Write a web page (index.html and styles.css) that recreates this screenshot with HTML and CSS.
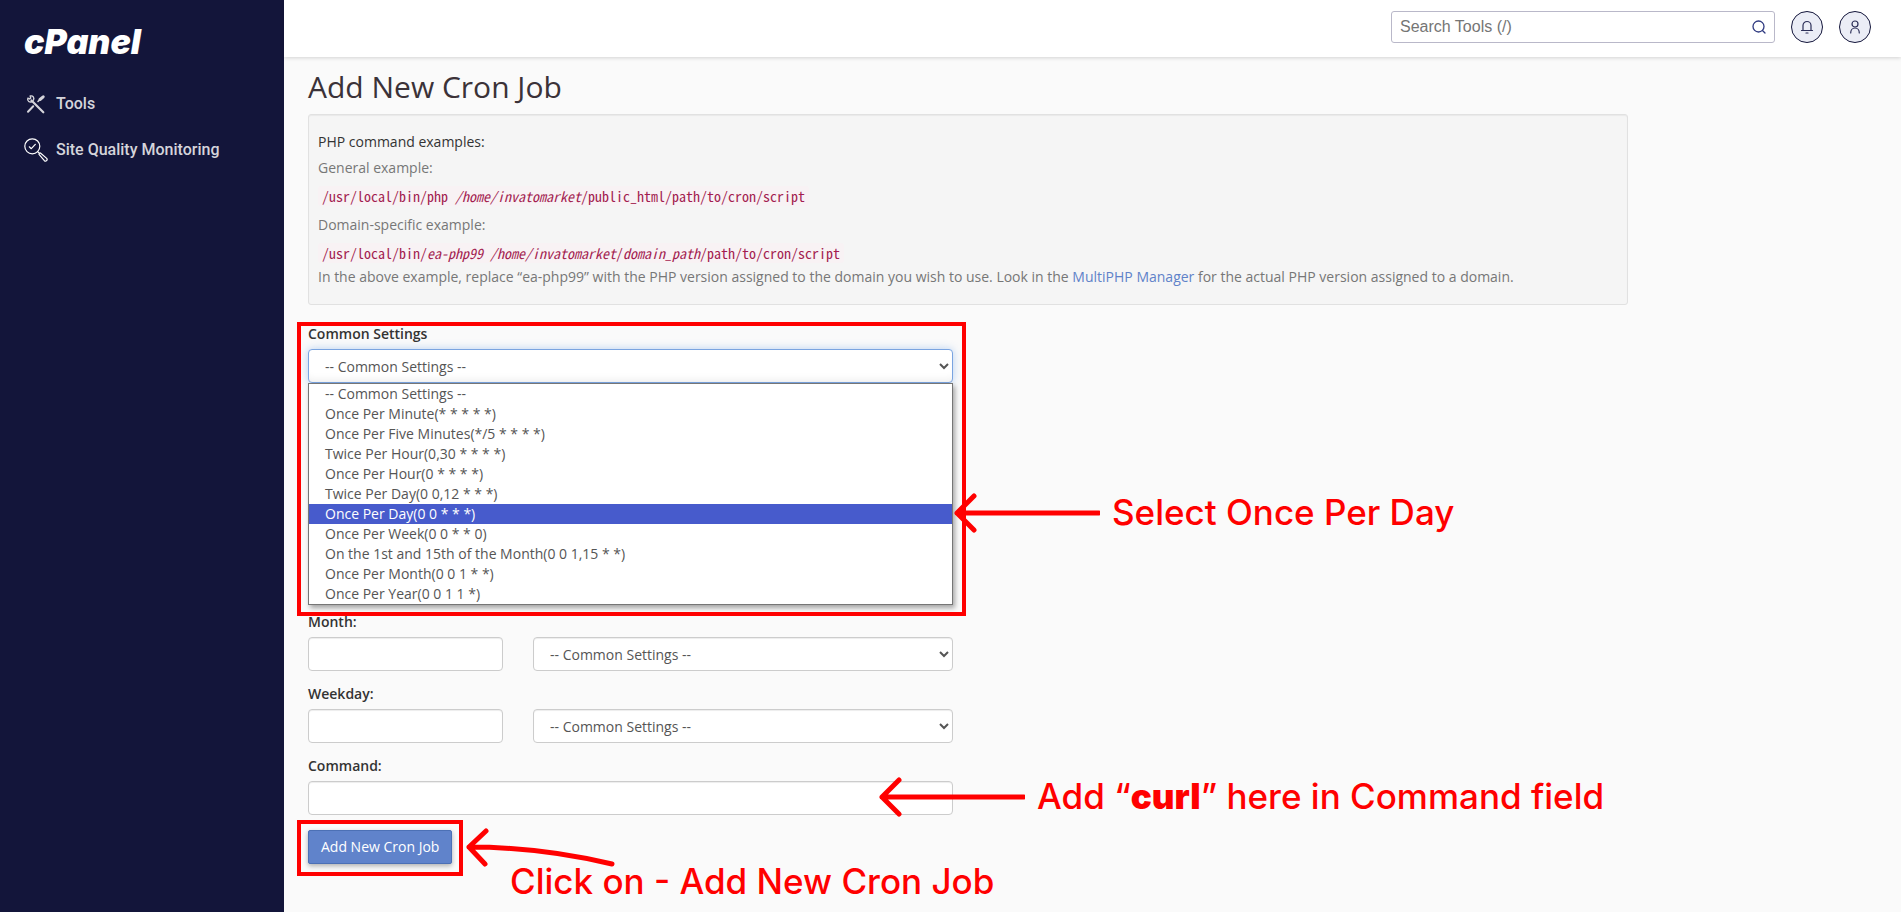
FILE: index.html
```html
<!DOCTYPE html>
<html lang="en">
<head>
<meta charset="utf-8">
<meta name="viewport" content="width=device-width, initial-scale=1">
<title>Add New Cron Job</title>
<link rel="stylesheet" href="styles.css">
</head>
<body class="app">
  <aside class="sidebar">
    <a class="logo" href="#">cPanel</a>
    <nav class="nav">
      <a class="nav-link" href="#">
        <svg class="nav-icon" viewBox="0 0 24 24" aria-hidden="true" fill="none" stroke="currentColor" stroke-linecap="round">
          <path d="M7.500 8.500 19.300 20.300" stroke-width="2.200"/>
          <path d="M3.800 6.200c-.9 2.800 2 4.700 4.200 3.400M6.200 4c2.800-.8 4.400 2 3.200 4.200M3.800 6.200l2 .8.9-.9L6.200 4" stroke-width="1.400"/>
          <path d="M14 9.500l1.600-1.600" stroke-width="1.600"/>
          <path d="M16 7.500l3.200-2.700" stroke-width="3"/>
          <path d="M9.200 14.300 4 19.800" stroke-width="2"/>
        </svg>
        <span>Tools</span>
      </a>
      <a class="nav-link" href="#">
        <svg class="nav-icon" viewBox="0 0 24 24" aria-hidden="true" fill="none" stroke="#fff" stroke-width="1.200" stroke-linecap="round" stroke-linejoin="round">
          <circle cx="8.300" cy="8.300" r="7.500"/>
          <path d="M5.300 8.800l2 1.900 4-4.300M13.700 13.700l1.700 1.700M15 16.300c0-.9.6-1.500 1.400-1.300l6.300 5.400c1.300 1.600-.7 3.600-2.300 2.300z"/>
        </svg>
        <span>Site Quality Monitoring</span>
      </a>
    </nav>
  </aside>

  <div class="page">
    <header class="topbar">
      <form class="search" role="search">
        <input class="search-input" type="text" placeholder="Search Tools (/)" aria-label="Search Tools">
        <button class="search-button" type="button" aria-label="Search">
          <svg viewBox="0 0 16 16" width="16" height="16" fill="none" stroke="#2f3a80" stroke-width="1.300" stroke-linecap="round" aria-hidden="true"><circle cx="7.500" cy="7.500" r="5.500"/><path d="M11.700 11.700 14 14"/></svg>
        </button>
      </form>
      <button class="round-button" type="button" aria-label="Notifications">
        <svg viewBox="0 0 16 16" width="16" height="16" fill="none" stroke="#2c2f58" stroke-width="1.200" stroke-linecap="round" stroke-linejoin="round" aria-hidden="true"><path d="M4 11.500V6.500a4 4 0 0 1 8 0v5M2.500 11.500h11M7 14h2"/></svg>
      </button>
      <button class="round-button" type="button" aria-label="Account">
        <svg viewBox="0 0 16 16" width="16" height="16" fill="none" stroke="#2c2f58" stroke-width="1.200" stroke-linecap="round" aria-hidden="true"><circle cx="8" cy="5" r="3"/><path d="M3.700 14c0-2.800 1.900-5 4.300-5s4.300 2.200 4.300 5"/></svg>
      </button>
    </header>

    <main class="content">
      <h1 class="title">Add New Cron Job</h1>

      <section class="well">
        <h2 class="well-title">PHP command examples:</h2>
        <p class="well-text">General example:</p>
        <p class="well-code"><code class="code">/usr/local/bin/php <em>/home/invatomarket</em>/public_html/path/to/cron/script</code></p>
        <p class="well-text">Domain-specific example:</p>
        <p class="well-code well-code-last"><code class="code">/usr/local/bin/<em>ea-php99</em> <em>/home/invatomarket</em>/<em>domain_path</em>/path/to/cron/script</code></p>
        <p class="well-text">In the above example, replace “ea-php99” with the PHP version assigned to the domain you wish to use. Look in the <a class="link" href="#">MultiPHP Manager</a> for the actual PHP version assigned to a domain.</p>
      </section>

      <form class="cron-form">
        <div class="field common">
          <label class="label" for="common">Common Settings</label>
          <select class="control control-focus" id="common"><option>-- Common Settings --</option></select>
          <ul class="options" role="listbox" aria-label="Common Settings">
            <li class="option" role="option">-- Common Settings --</li>
            <li class="option" role="option">Once Per Minute(* * * * *)</li>
            <li class="option" role="option">Once Per Five Minutes(*/5 * * * *)</li>
            <li class="option" role="option">Twice Per Hour(0,30 * * * *)</li>
            <li class="option" role="option">Once Per Hour(0 * * * *)</li>
            <li class="option" role="option">Twice Per Day(0 0,12 * * *)</li>
            <li class="option option-active" role="option" aria-selected="true">Once Per Day(0 0 * * *)</li>
            <li class="option" role="option">Once Per Week(0 0 * * 0)</li>
            <li class="option" role="option">On the 1st and 15th of the Month(0 0 1,15 * *)</li>
            <li class="option" role="option">Once Per Month(0 0 1 * *)</li>
            <li class="option" role="option">Once Per Year(0 0 1 1 *)</li>
          </ul>
          <div class="note note-select">
            <svg class="arrow" viewBox="0 0 148 40" width="148" height="40" aria-hidden="true"><path d="M22 3 5 20 22 37M5 20H147"/></svg>
            <span class="note-text">Select Once Per Day</span>
          </div>
        </div>

        <div class="field">
          <label class="label" for="month">Month:</label>
          <div class="pair">
            <input class="control" id="month" type="text">
            <select class="control" aria-label="Month common settings"><option>-- Common Settings --</option></select>
          </div>
        </div>

        <div class="field">
          <label class="label" for="weekday">Weekday:</label>
          <div class="pair">
            <input class="control" id="weekday" type="text">
            <select class="control" aria-label="Weekday common settings"><option>-- Common Settings --</option></select>
          </div>
        </div>

        <div class="field">
          <label class="label" for="command">Command:</label>
          <input class="control" id="command" type="text">
          <div class="note note-command">
            <svg class="arrow" viewBox="0 0 148 40" width="148" height="40" aria-hidden="true"><path d="M22 3 5 20 22 37M5 20H147"/></svg>
            <span class="note-text">Add “<strong class="strong">curl</strong>” here in Command field</span>
          </div>
        </div>

        <div class="submit">
          <button class="button" type="button">Add New Cron Job</button>
          <svg class="arrow submit-arrow" viewBox="0 0 152 42" width="152" height="42" aria-hidden="true"><path d="M22 4 5 20 21 37M5 20C53 20 102 26 148 37"/></svg>
          <div class="note note-submit">Click on - Add New Cron Job</div>
        </div>
      </form>
    </main>
  </div>
</body>
</html>
```

FILE: styles.css
```css
* { box-sizing: border-box; }

body {
  margin: 0;
  font: 14px/20px "Open Sans", sans-serif;
  color: #333;
  background: #fafafa;
}

h1, h2, p, ul { margin: 0; padding: 0; font-weight: 400; }

.app { display: flex; min-height: 100vh; }

/* Sidebar */
.sidebar {
  flex: none;
  width: 284px;
  padding: 22px 24px;
  background: #13153a;
}
.logo {
  display: block;
  font: italic 900 34px/40px Inter, sans-serif;
  color: #fff;
  text-decoration: none;
}
.nav { display: grid; gap: 22px; margin-top: 30px; }
.nav-link {
  display: flex;
  align-items: center;
  gap: 8px;
  font: 500 16px/24px Roboto, sans-serif;
  color: #d5d4da;
  text-decoration: none;
}
.nav-icon { width: 24px; height: 24px; }

/* Top bar */
.page { flex: 1; min-width: 0; }
.topbar {
  display: flex;
  justify-content: flex-end;
  gap: 16px;
  padding: 11px 30px 14px;
  background: #fff;
  box-shadow: 0 1px 4px rgba(0, 0, 0, .16);
}
.search {
  display: flex;
  width: 384px;
  height: 32px;
  border: 1px solid #b9b8c9;
  border-radius: 3px;
  background: #fff;
}
.search-input {
  flex: 1;
  min-width: 0;
  padding: 0 8px;
  border: 0;
  background: none;
  font: 16px/24px "Liberation Sans", sans-serif;
  outline: 0;
}
.search-input::placeholder { color: #757575; }
.search-button {
  display: grid;
  place-items: center;
  width: 30px;
  padding: 0;
  border: 0;
  background: none;
}
.round-button {
  display: grid;
  place-items: center;
  width: 32px;
  height: 32px;
  padding: 0;
  border: 1px solid #13153a;
  border-radius: 50%;
  background: #ebedf6;
}

/* Content */
.content { padding: 10px 24px 32px; }
.title {
  font-size: 30px;
  line-height: 40px;
  color: #3b3238;
}
.well {
  max-width: 1320px;
  margin-top: 7px;
  padding: 17px 9px;
  border: 1px solid #e1e1e1;
  border-radius: 3px;
  background: #f5f5f5;
  box-shadow: inset 0 1px 1px rgba(0, 0, 0, .05);
}
.well-title { margin-bottom: 6px; font-size: 14px; line-height: 20px; }
.well-text { color: #777; }
.well-code { display: flex; margin: 8px 0 9px; }
.well-code-last { margin-bottom: 4px; }
.code {
  padding: 0 4px;
  border-radius: 3px;
  background: #f8f2f4;
  color: #a31d50;
  font: 14px/20px "Noto Sans Mono CJK SC", "DejaVu Sans Mono", monospace;
}
.link { color: #5f82c9; text-decoration: none; }

/* Form */
.cron-form {
  display: grid;
  gap: 13px;
  max-width: 645px;
  margin-top: 19px;
}
.field { position: relative; }
.label {
  display: block;
  width: max-content;
  margin-bottom: 5px;
  font-weight: 600;
}
.pair {
  display: grid;
  grid-template-columns: 195fr 420fr;
  gap: 30px;
}
.control {
  display: block;
  width: 100%;
  height: 34px;
  padding: 6px 12px;
  border: 1px solid #ccc;
  border-radius: 4px;
  background: #fff;
  box-shadow: inset 0 1px 1px rgba(0, 0, 0, .075);
  color: #555;
  font: inherit;
}
.control-focus {
  border-color: #7aa4e0;
  box-shadow: inset 0 -8px 8px -6px rgba(0, 0, 0, .07), 0 0 8px rgba(102, 160, 233, .45);
}
.common { margin-bottom: -6px; }
.options {
  list-style: none;
  border: 1px solid #767676;
  background: #fff;
  box-shadow: 2px 3px 5px rgba(0, 0, 0, .35);
  color: #555;
}
.option { padding: 0 16px; }
.option-active { background: #475bcc; color: #fff; }
.submit { position: relative; width: max-content; margin-top: 2px; }
.button {
  display: block;
  height: 34px;
  padding: 0 12px;
  border: 1px solid #4c70b5;
  border-radius: 2px;
  background: #6083cb;
  box-shadow: 0 2px 5px rgba(0, 0, 0, .3);
  color: #fff;
  font: inherit;
}

/* Callouts */
.common::after,
.submit::after {
  content: "";
  position: absolute;
  border: 4px solid #f00;
  pointer-events: none;
}
.common::after { inset: -2px -13px -11px -11px; }
.submit::after { inset: -10px -11px -12px; }
.arrow {
  flex: none;
  fill: none;
  stroke: #f00;
  stroke-width: 5;
  stroke-linecap: round;
  stroke-linejoin: round;
}
.note {
  position: absolute;
  z-index: 1;
  display: flex;
  align-items: center;
  gap: 12px;
  color: #f00;
  font: 500 35px/40px Inter, sans-serif;
  white-space: nowrap;
}
.note-text { padding-bottom: 2px; }
.note-select { left: 644px; top: 168px; }
.note-command { left: 569px; top: 20px; }
.note-submit { left: 202px; top: 31px; }
.submit-arrow { position: absolute; left: 156px; top: -3px; }
.strong { font-weight: 900; }
```
